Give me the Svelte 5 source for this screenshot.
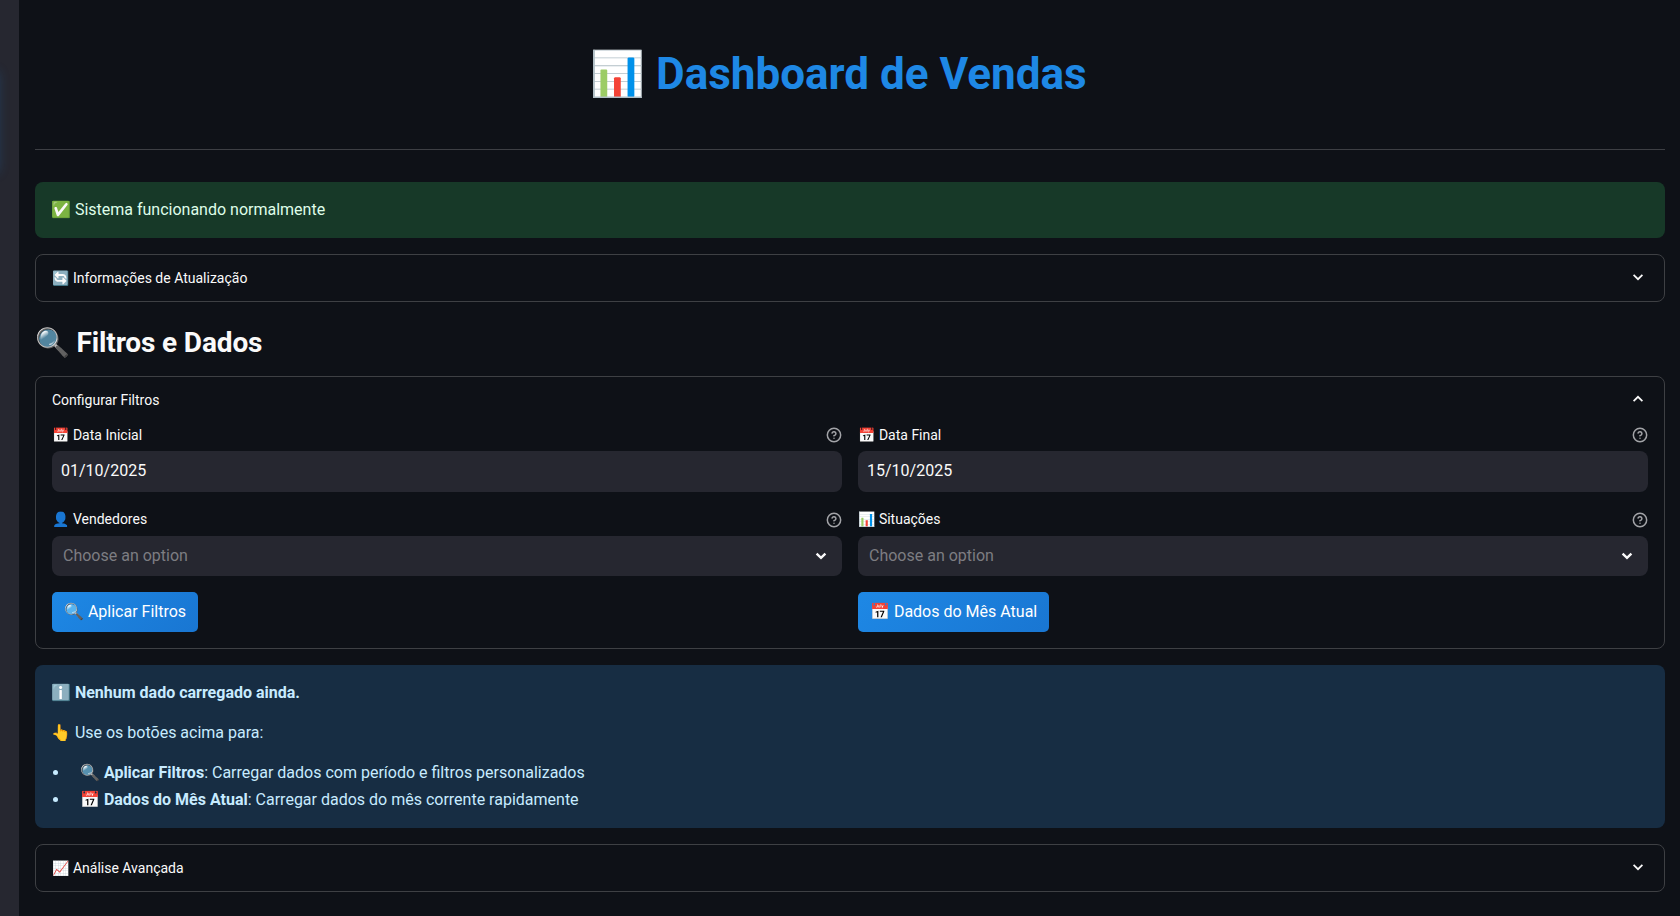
<script>
  const fields = [
    { icon: '📅', label: 'Data Inicial', value: '01/10/2025', kind: 'date' },
    { icon: '📅', label: 'Data Final', value: '15/10/2025', kind: 'date' },
    { icon: '👤', label: 'Vendedores', value: 'Choose an option', kind: 'select' },
    { icon: '📊', label: 'Situações', value: 'Choose an option', kind: 'select' },
  ];
  const actions = ['🔍 Aplicar Filtros', '📅 Dados do Mês Atual'];
</script>

{#snippet chevron(up = false)}
  <svg class="chevron" viewBox="0 0 20 20" aria-hidden="true">
    <path d={up ? 'M5.6 12.2 10 7.8l4.4 4.4' : 'M5.6 7.8 10 12.2l4.4-4.4'} />
  </svg>
{/snippet}

<div class="app">
  <aside><div class="glow"></div></aside>
  <main>
    <h1>📊 Dashboard de Vendas</h1>
    <hr />
    <div class="alert success">✅ Sistema funcionando normalmente</div>
    <section class="expander closed">
      <div class="summary"><span>🔄 Informações de Atualização</span>{@render chevron()}</div>
    </section>
    <h2>🔍 Filtros e Dados</h2>
    <section class="expander open">
      <div class="summary"><span>Configurar Filtros</span>{@render chevron(true)}</div>
      <div class="grid">
        {#each fields as field}
          <div class="field {field.kind}">
            <div class="label">
              <span>{field.icon} {field.label}</span>
              <svg class="help" viewBox="0 0 24 24" aria-hidden="true">
                <circle cx="12" cy="12" r="10" />
                <path d="M9.09 9a3 3 0 0 1 5.83 1c0 2-3 3-3 3" />
                <path d="M12 17h.01" />
              </svg>
            </div>
            <div class="control">
              <span>{field.value}</span>
              {#if field.kind === 'select'}
                <svg class="arrow" viewBox="0 0 24 24" aria-hidden="true">
                  <path d="M7.6 9.7 12 13.9 16.4 9.7" />
                </svg>
              {/if}
            </div>
          </div>
        {/each}
        {#each actions as action}
          <button>{action}</button>
        {/each}
      </div>
    </section>
    <div class="alert info">
      <p><strong>ℹ️ Nenhum dado carregado ainda.</strong></p>
      <p>👆 Use os botões acima para:</p>
      <ul>
        <li>🔍 <strong>Aplicar Filtros</strong>: Carregar dados com período e filtros personalizados</li>
        <li>📅 <strong>Dados do Mês Atual</strong>: Carregar dados do mês corrente rapidamente</li>
      </ul>
    </div>
    <section class="expander closed">
      <div class="summary"><span>📈 Análise Avançada</span>{@render chevron()}</div>
    </section>
  </main>
</div>

<style>
  :global(body) { margin: 0; background: #0e1117; }
  * { box-sizing: border-box; }
  .app {
    display: flex;
    height: 916px;
    overflow: hidden;
    color: #fafafa;
    font: 16px/1.6 Roboto, "Noto Color Emoji", sans-serif;
  }
  aside { position: relative; flex: none; width: 19px; background: #262730; overflow: hidden; }
  .glow {
    position: absolute; left: -22px; top: 68px; width: 20px; height: 100px;
    box-shadow: 0 4px 12px rgba(30, 136, 229, 0.25);
  }
  main { flex: 1; min-width: 0; padding: 0 15px 0 16px; }
  h1 {
    margin: 0; padding: 47px 23px 0 0; height: 149px;
    text-align: center; color: #1e88e5; font-size: 44px; line-height: 54px; font-weight: 700;
  }
  hr { margin: 0 0 32px; border: 0; border-top: 1px solid #3d3f44; }
  .alert { border-radius: 8px; padding: 16px; }
  .success { height: 56px; padding-top: 15px; margin-bottom: 16px; background: #173928; color: #dffde9; }
  .expander { border: 1px solid #3e4044; border-radius: 8px; padding: 0 16px; }
  .closed { height: 48px; }
  .summary { display: flex; align-items: center; justify-content: space-between; height: 46px; font-size: 14px; }
  .chevron { width: 20px; height: 20px; margin-bottom: 2px; fill: none; stroke: #fafafa; stroke-width: 1.7; }
  h2 { margin: 0; padding: 21px 0 0; height: 74px; font-size: 28px; line-height: 40px; font-weight: 700; letter-spacing: -0.005em; }
  .open { height: 273px; }
  .grid { display: grid; grid-template-columns: 1fr 1fr; column-gap: 16px; justify-items: start; }
  .field { width: 100%; }
  .date { height: 85px; }
  .select { height: 84px; }
  .label { display: flex; justify-content: space-between; align-items: center; height: 28px; padding-bottom: 4px; font-size: 14px; }
  .select .label > span { margin-bottom: 2px; }
  .help { width: 16px; height: 16px; fill: none; stroke: #a3a4a8; stroke-width: 2.25; stroke-linecap: round; stroke-linejoin: round; }
  .control {
    display: flex; align-items: center; justify-content: space-between;
    height: 41px; padding: 0 9px 2px; border-radius: 8px; background: #262730;
  }
  .select .control { height: 40px; padding: 0 9px 0 11px; color: #7d7d82; }
  .arrow { width: 24px; height: 24px; fill: none; stroke: #fafafa; stroke-width: 2.4; }
  button {
    height: 40px; padding: 0 12px; border: 0; border-radius: 5px; color: #fff;
    background: linear-gradient(135deg, #1e88e5, #1976d2); font: inherit;
  }
  .info { height: 163px; margin: 16px 0; background: #172d43; color: #c7ebff; line-height: 24px; }
  p { margin: 0 0 16px; }
  ul { margin: -2px 0 0; padding: 0; list-style: none; }
  li { display: flex; align-items: center; line-height: 27px; white-space: pre; }
  li::before { content: ""; width: 5px; height: 5px; margin: 0 22px 0 2px; border-radius: 50%; background: currentColor; }
</style>
